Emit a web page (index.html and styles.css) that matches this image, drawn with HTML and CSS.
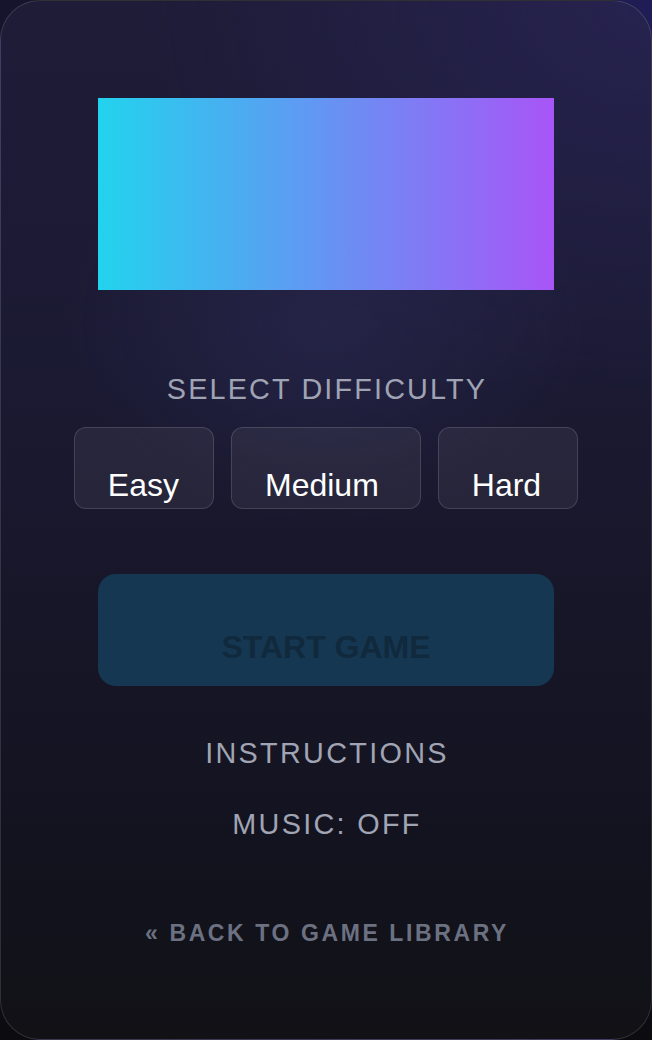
FILE: index.html
```html
<!DOCTYPE html>
<html lang="en">
<head>
<meta charset="utf-8">
<title>Game Menu</title>
<link rel="stylesheet" href="styles.css">
</head>
<body>
<main class="card">
  <div class="banner"></div>
  <h2 class="label">SELECT DIFFICULTY</h2>
  <div class="levels">
    <button class="level level-easy">Easy</button>
    <button class="level level-medium">Medium</button>
    <button class="level level-hard">Hard</button>
  </div>
  <button class="start">START GAME</button>
  <div class="menu-item menu-first">INSTRUCTIONS</div>
  <div class="menu-item menu-second">MUSIC: OFF</div>
  <a class="back">« BACK TO GAME LIBRARY</a>
</main>
</body>
</html>
```
FILE: styles.css
```css
* { box-sizing: border-box; }
html, body { margin: 0; padding: 0; }
body {
  width: 652px;
  height: 1040px;
  overflow: hidden;
  font-family: "Liberation Sans", Arial, sans-serif;
  background:
    radial-gradient(ellipse at 100% 0%, #201d56 0%, rgba(32,29,86,0) 45%),
    linear-gradient(to bottom, #15142c 0%, #121224 50%, #0b0b10 100%);
}
.card {
  width: 652px;
  height: 1040px;
  border: 1px solid rgba(255,255,255,0.13);
  border-radius: 40px;
  display: flex;
  flex-direction: column;
  align-items: center;
  padding-top: 97px;
  background:
    radial-gradient(ellipse 260px 200px at 50% 31%, rgba(60,60,120,0.28) 0%, rgba(60,60,120,0) 100%),
    radial-gradient(ellipse 500px 400px at 100% 0%, rgba(44,40,100,0.55) 0%, rgba(44,40,100,0) 100%),
    linear-gradient(to bottom, #1e1c37 0%, #1b1a33 35%, #171628 60%, #131320 80%, #111116 100%);
}
.banner {
  width: 456px;
  height: 192px;
  background: linear-gradient(to right, #22d3ee, #a855f7);
}
.label {
  margin: 83px 0 0;
  font-size: 28.8px;
  line-height: 33px;
  font-weight: 400;
  letter-spacing: 2.15px;
  color: #9fa3b4;
  padding-left: 2px;
}
.levels {
  margin-top: 21px;
  display: flex;
  gap: 17px;
}
.level {
  font-family: "Liberation Sans", Arial, sans-serif;
  font-size: 32px;
  line-height: 36px;
  color: #ffffff;
  text-align: left;
  background: rgba(255,255,255,0.06);
  border: 1px solid rgba(255,255,255,0.14);
  border-radius: 12px;
  padding: 39px 34px 5px 33px;
}
.level-medium { padding-left: 33px; padding-right: 41px; }
.level-hard { padding-left: 33px; padding-right: 36px; }
.start {
  margin-top: 65px;
  width: 456px;
  height: 112px;
  border: none;
  border-radius: 18px;
  background: #163751;
  color: #10293d;
  font-family: "Liberation Sans", Arial, sans-serif;
  font-size: 32px;
  line-height: 36px;
  font-weight: 700;
  padding: 55px 0 21px;
}
.menu-item {
  font-size: 28.8px;
  line-height: 33px;
  letter-spacing: 2.3px;
  color: #a0a4b3;
  padding-left: 2px;
}
.menu-first { margin-top: 51px; }
.menu-second { margin-top: 38px; }
.back {
  margin-top: 79px;
  font-size: 23px;
  line-height: 26px;
  font-weight: 700;
  letter-spacing: 2.6px;
  color: #6c7182;
  padding-left: 2px;
}
```
